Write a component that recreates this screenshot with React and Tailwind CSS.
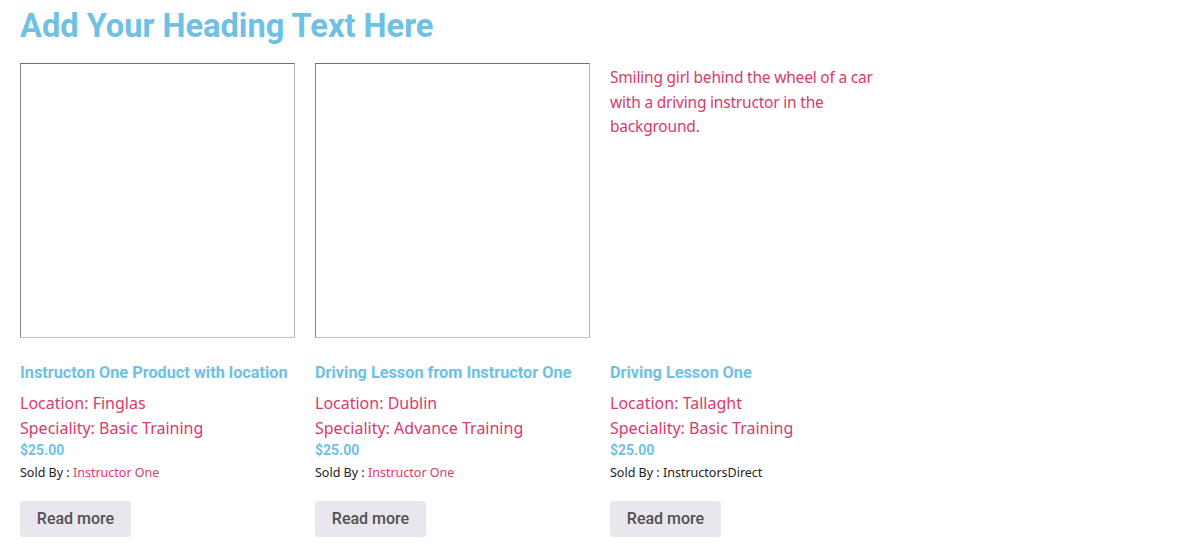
import React from 'react';

const products = [
  {
    title: 'Instructon One Product with location',
    location: 'Finglas',
    speciality: 'Basic Training',
    price: '$25.00',
    seller: 'Instructor One',
    sellerLink: true,
  },
  {
    title: 'Driving Lesson from Instructor One',
    location: 'Dublin',
    speciality: 'Advance Training',
    price: '$25.00',
    seller: 'Instructor One',
    sellerLink: true,
  },
  {
    title: 'Driving Lesson One',
    location: 'Tallaght',
    speciality: 'Basic Training',
    price: '$25.00',
    seller: 'InstructorsDirect',
    sellerLink: false,
    alt: 'Smiling girl behind the wheel of a car with a driving instructor in the background.',
  },
];

const ProductCard = ({ product }) => (
  <div className="flex flex-col w-[275px]">
    {/* Product image placeholder (broken image shows alt text) */}
    {product.alt ? (
      <div className="h-[275px] pt-[2px] text-[15.5px] leading-[24.5px] tracking-[-0.2px] text-[#d63b6c] font-['Noto_Sans',sans-serif]">
        {product.alt}
      </div>
    ) : (
      <div className="h-[275px] border border-t-[#6f6f6f] border-l-[#8a8a8a] border-r-[#b8b8b8] border-b-[#c4c4c4]" />
    )}

    <h2 className="mt-[26px] text-[16.3px] leading-[18px] font-bold text-[#6ec1e4] font-['Roboto',sans-serif] whitespace-nowrap">
      {product.title}
    </h2>

    <div className="mt-[9px] text-[16px] leading-[24.5px] text-[#d63b6c] font-['Noto_Sans',sans-serif]">
      <p>Location: {product.location}</p>
      <p>Speciality: {product.speciality}</p>
    </div>

    <div className="mt-[1px] text-[14px] leading-[18px] font-bold text-[#6ec1e4] font-['Roboto',sans-serif]">
      {product.price}
    </div>

    <div className="mt-[5px] text-[12.5px] leading-[18px] text-[#222] font-['Noto_Sans',sans-serif]">
      Sold By :&nbsp;
      <span className={product.sellerLink ? 'text-[#d63b6c]' : ''}>{product.seller}</span>
    </div>

    <button className="mt-[19px] w-[111px] h-[36px] rounded-[3px] bg-[#e9e6ed] text-[#515151] text-[16px] font-medium font-['Roboto',sans-serif]">
      Read more
    </button>
  </div>
);

export default function App() {
  return (
    <div className="w-[1200px] h-[544px] overflow-hidden bg-white px-5 pt-[7px]">
      <h1 className="text-[32.6px] leading-[38px] font-bold text-[#6ec1e4] font-['Roboto',sans-serif]">
        Add Your Heading Text Here
      </h1>
      <div className="mt-[18px] flex gap-5">
        {products.map((p) => (
          <ProductCard key={p.title} product={p} />
        ))}
      </div>
    </div>
  );
}
